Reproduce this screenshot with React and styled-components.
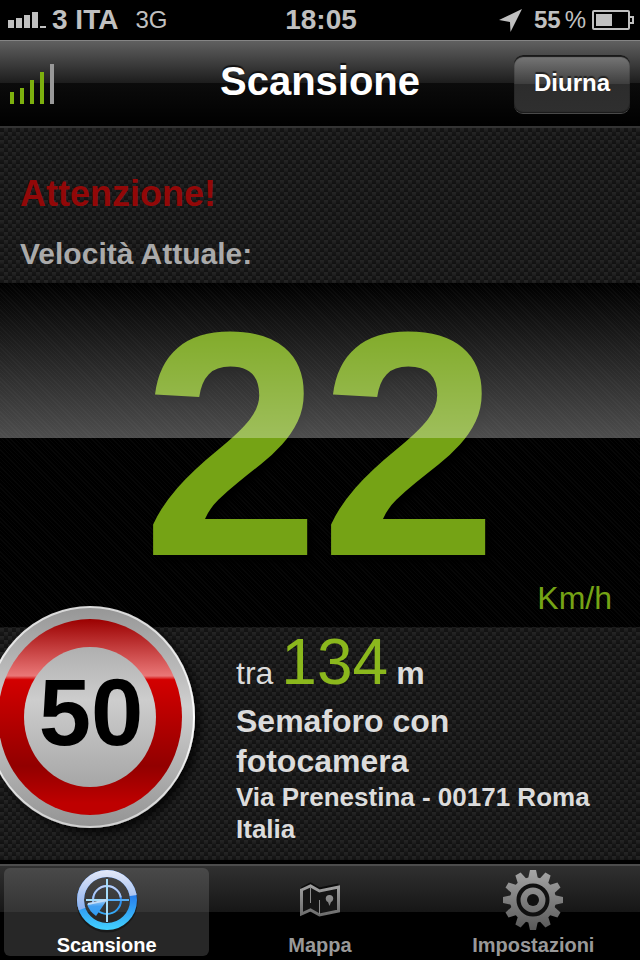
import React from "react";
import styled, { createGlobalStyle, css } from "styled-components";

const GlobalStyle = createGlobalStyle`
  *, *::before, *::after { box-sizing: border-box; }
  body { margin: 0; background: #000; }
  h1, h2, p { margin: 0; }
  button { font: inherit; color: inherit; border: 0; cursor: pointer; }
`;

const Screen = styled.div`
  min-height: 100vh;
  display: flex;
  flex-direction: column;
  overflow: hidden;
  color: #dcdcdc;
  font-family: "Liberation Sans", Arial, sans-serif;
  font-weight: 700;
  background:
    repeating-linear-gradient(rgba(0, 0, 0, 0) 0 1px, rgba(0, 0, 0, 0.25) 4px),
    repeating-conic-gradient(#242424 0 25%, #161616 0 50%) 0 0 / 8px 8px;
`;

const StatusBar = styled.header`
  height: 40px;
  padding: 0 6px 0 8px;
  display: grid;
  grid-template-columns: 1fr auto 1fr;
  align-items: center;
  background: #000;
  color: #c0c0c0;
`;

const StatusGroup = styled.div`
  display: flex;
  align-items: center;
  justify-content: ${(p) => (p.$end ? "flex-end" : "flex-start")};
  gap: ${(p) => (p.$end ? 6 : 5)}px;
  white-space: nowrap;
`;

const StatusText = styled.span`
  font-size: ${(p) => p.$size || 24}px;
  font-weight: ${(p) => (p.$light ? 400 : 700)};
  line-height: 32px;
`;

const Network = styled(StatusText)`
  margin-left: 12px;
`;

const Charge = styled.span`
  display: flex;
  gap: 4px;
  margin-left: 6px;
`;

const TitleBar = styled.div`
  display: grid;
  grid-template-columns: 1fr auto 1fr;
  align-items: center;
  height: 88px;
  padding: 0 10px;
  border-top: 1px solid #858585;
  border-bottom: 2px solid #333;
  background: linear-gradient(#606060, #1c1c1c 50%, #0b0b0b 50%, #000);
`;

const Title = styled.h1`
  color: #fff;
  font-size: 40px;
  line-height: 48px;
  margin-bottom: 6px;
  text-shadow: 0 -2px 1px #111;
`;

const ModeButton = styled.button`
  justify-self: end;
  height: 58px;
  padding: 0 20px 2px;
  color: #fff;
  font-size: 24px;
  font-weight: 700;
  border-radius: 9px;
  background: linear-gradient(#797979, #3e3e3e 50%, #2c2c2c 50%, #2f2f2f);
  box-shadow: inset 0 2px 1px #191919, inset 0 -1px 1px #1a1a1a, 0 1px 0 #4a4a4a;
  text-shadow: 0 -2px 1px #222;
`;

const Signal = styled.svg`
  display: block;
`;

const Intro = styled.section`
  padding: 46px 20px 11px;
`;

const Warning = styled.p`
  color: #920808;
  font-size: 36px;
  line-height: 40px;
`;

const SpeedLabel = styled.h2`
  margin-top: 22px;
  color: #aaa;
  font-size: 30px;
  line-height: 36px;
`;

const SpeedPanel = styled.section`
  position: relative;
  padding: 41px 28px 11px;
  color: #75a315;
  text-align: center;
  background: repeating-linear-gradient(45deg, #000 0 2px, #070707 2px 3px);

  &::after {
    content: "";
    position: absolute;
    inset: 0 0 auto;
    height: 45%;
    background: linear-gradient(rgba(255, 255, 255, 0), rgba(255, 255, 255, 0.3));
    pointer-events: none;
  }
`;

const SpeedValue = styled.p`
  font-size: 320px;
  line-height: 240px;
  text-shadow: 5px 6px 6px #000;
`;

const SpeedUnit = styled.p`
  margin-top: 16px;
  text-align: right;
  font-size: 32px;
  font-weight: 400;
  line-height: 36px;
`;

const Detail = styled.section`
  flex: 1;
  display: flex;
  align-items: flex-start;
`;

const SignColumn = styled.div`
  flex: 0 0 236px;
  margin-top: -27px;
`;

const SignDrawing = styled.svg`
  position: relative;
  display: block;
`;

const DetailText = styled.div`
  flex: 1;
  padding: 3px 20px 15px 0;
`;

const Distance = styled.p`
  display: flex;
  align-items: baseline;
  gap: 8px;
  font-size: 32px;
  font-weight: 400;
  line-height: 32px;
`;

const Meters = styled.span`
  color: #8bb81d;
  font-size: 64px;
  line-height: 64px;
`;

const Unit = styled.span`
  font-weight: 700;
`;

const Hazard = styled.h2`
  max-width: 300px;
  margin-top: 7px;
  font-size: 32px;
  line-height: 40px;
`;

const Address = styled.p`
  font-size: 26px;
  line-height: 32px;
`;

const TabBar = styled.nav`
  display: grid;
  grid-template-columns: repeat(3, 1fr);
  gap: 8px;
  padding: 4px 4px;
  border-top: 4px solid #000;
  background: linear-gradient(#4c4c4c 2px, #303030 2px, #161616 48px, #000 48px);
`;

const Tab = styled.button`
  display: flex;
  flex-direction: column;
  align-items: center;
  gap: 4px;
  padding: 2px 0 0;
  border-radius: 6px;
  color: ${(p) => (p.$active ? "#fff" : "#999")};
  background: transparent;
  ${(p) =>
    p.$active &&
    css`
      background: linear-gradient(#494949, #343434 44px, #272727 44px);
    `}
`;

const TabLabel = styled.span`
  font-size: 20px;
  font-weight: 700;
  line-height: 22px;
`;

const TabIcon = styled.svg`
  display: block;
  overflow: visible;
`;

function CarrierBars() {
  return (
    <svg width="39" height="16" viewBox="0 0 39 16" fill="#c0c0c0" aria-hidden="true">
      <path d="M0 8h6v8H0zM8 6h6v10H8zM16 3h6v13h-6zM24 0h6v16h-6zM32 14h6v2h-6z" />
    </svg>
  );
}

function LocationArrow() {
  return (
    <svg width="23" height="23" viewBox="0 0 23 23" fill="#c0c0c0" aria-hidden="true">
      <path d="M23 0 11.500 23 11 13 0 11z" />
    </svg>
  );
}

function Battery() {
  return (
    <svg width="42" height="20" viewBox="0 0 42 20" aria-hidden="true">
      <rect x="1" y="1" width="36" height="18" rx="1" fill="none" stroke="#c0c0c0" strokeWidth="2" />
      <path d="M38 7h3v6h-3" fill="none" stroke="#c0c0c0" strokeWidth="2" />
      <path d="M4 4h16v12H4z" fill="#c0c0c0" />
    </svg>
  );
}

function GpsBars() {
  return (
    <Signal width="44" height="40" viewBox="0 0 44 40" role="img" aria-label="GPS">
      <path d="M0 28h4v12H0zM10 24h4v16h-4zM20 16h4v24h-4zM30 8h4v32h-4z" fill="#7db00e" />
      <path d="M40 0h4v40h-4z" fill="#999" />
    </Signal>
  );
}

function SpeedLimit({ value }) {
  return (
    <SignDrawing width="210" height="233" viewBox="0 600 210 233" overflow="visible" role="img" aria-label={`Limite ${value}`}>
      <defs>
        <linearGradient id="rim" x1="0" y1="0" x2="0" y2="1">
          <stop offset="0" stopColor="#969696" />
          <stop offset=".45" stopColor="#cfcfcf" />
          <stop offset="1" stopColor="#949494" />
        </linearGradient>
        <linearGradient id="edge" x1="0" y1="0" x2="0" y2="1">
          <stop offset="0" stopColor="#d8d8d8" />
          <stop offset=".5" stopColor="#fff" />
          <stop offset="1" stopColor="#d0d0d0" />
        </linearGradient>
        <linearGradient id="red" x1="0" y1="0" x2="0" y2="1">
          <stop offset="0" stopColor="#9b0000" />
          <stop offset=".29" stopColor="#ea7777" />
          <stop offset=".31" stopColor="#d30000" />
          <stop offset=".75" stopColor="#920000" />
          <stop offset=".94" stopColor="#be0000" />
        </linearGradient>
        <linearGradient id="face" x1="0" y1="0" x2="0" y2="1">
          <stop offset="0" stopColor="#afafaf" />
          <stop offset=".38" stopColor="#cdcdcd" />
          <stop offset="1" stopColor="#a6a6a6" />
        </linearGradient>
        <filter id="shade" x="-20%" y="-20%" width="140%" height="140%">
          <feDropShadow dx="5" dy="5" stdDeviation="5" floodColor="#000" floodOpacity=".8" />
        </filter>
      </defs>
      <ellipse cx="90" cy="717" rx="104" ry="110" fill="url(#rim)" stroke="url(#edge)" strokeWidth="2" filter="url(#shade)" />
      <ellipse cx="90" cy="717" rx="92" ry="98" fill="url(#red)" />
      <ellipse cx="90" cy="717" rx="66" ry="70" fill="url(#face)" />
      <text x="91" y="745" textAnchor="middle" fontSize="94" fontWeight="700" fill="#000">{value}</text>
    </SignDrawing>
  );
}

function RadarIcon() {
  return (
    <TabIcon width="60" height="60" viewBox="0 0 60 60" aria-hidden="true">
      <defs>
        <linearGradient id="radarLow" gradientUnits="userSpaceOnUse" x1="0" y1="22" x2="0" y2="60">
          <stop offset="0" stopColor="#2475ea" />
          <stop offset="1" stopColor="#43d3ff" />
        </linearGradient>
        <linearGradient id="radarHigh" gradientUnits="userSpaceOnUse" x1="0" y1="0" x2="0" y2="38">
          <stop offset="0" stopColor="#e4e9f8" />
          <stop offset="1" stopColor="#8fb2ee" />
        </linearGradient>
        <linearGradient id="sweep" x1="0" y1="0" x2="0" y2="1">
          <stop offset="0" stopColor="#a4ccf5" />
          <stop offset=".4" stopColor="#3f9ff1" />
          <stop offset="1" stopColor="#2e9cf5" />
        </linearGradient>
        <clipPath id="glossTop"><path d="M0 0h60v25Q30 28 0 41z" /></clipPath>
      </defs>
      <circle cx="30" cy="32" r="28" fill="none" stroke="#111" strokeOpacity=".6" strokeWidth="5" />
      <g fill="none" stroke="url(#radarLow)">
        <circle cx="30" cy="30" r="26.500" strokeWidth="7" />
        <circle cx="30" cy="30" r="14" strokeWidth="2" />
      </g>
      <g clipPath="url(#glossTop)" fill="none" stroke="url(#radarHigh)">
        <circle cx="30" cy="30" r="26.500" strokeWidth="7" />
        <circle cx="30" cy="30" r="14" strokeWidth="2" />
      </g>
      <path d="M30 30h22" stroke="#57adf5" strokeWidth="2" />
      <path d="M30 9v43M9 30h21" stroke="#a4dcfa" strokeWidth="2" />
      <path d="M30 30 10 34Q12 41 19 46z" fill="url(#sweep)" />
      <path d="M30 30 11 34" stroke="#c2dcf7" strokeWidth="2" />
    </TabIcon>
  );
}

function MapIcon() {
  return (
    <TabIcon width="60" height="60" viewBox="0 0 60 60" aria-hidden="true">
      <defs>
        <linearGradient id="mapGrey" gradientUnits="userSpaceOnUse" x1="0" y1="14" x2="0" y2="46">
          <stop offset="0" stopColor="#a3a3a3" />
          <stop offset="1" stopColor="#6b6b6b" />
        </linearGradient>
      </defs>
      <path d="m11.500 18.500 9-4.500 9 5 19-4" fill="none" stroke="#0c0c0c" strokeWidth="3" />
      <path d="m11.500 20 9-4 9 5 19-4v24l-19 4-9-5-9 4z" fill="#151515" stroke="url(#mapGrey)" strokeWidth="3" />
      <path d="M20.500 18v15M29.500 30v14" stroke="#8a8a8a" strokeWidth="1" />
      <path d="M39.500 25c-5 0-4.500 6-1.500 7l1.500 4 1.500-4c3-1 3.500-7-1.500-7z" fill="url(#mapGrey)" />
    </TabIcon>
  );
}

const TEETH = Array.from({ length: 12 }, (_, i) => i * 30);

function GearIcon() {
  return (
    <TabIcon width="60" height="60" viewBox="0 0 60 60" aria-hidden="true">
      <defs>
        <linearGradient id="gearGrey" gradientUnits="userSpaceOnUse" x1="0" y1="0" x2="0" y2="60">
          <stop offset="0" stopColor="#a6a6a6" />
          <stop offset="1" stopColor="#585858" />
        </linearGradient>
        <mask id="gearShape">
          <g fill="#fff">
            <circle cx="30" cy="30" r="23" />
            {TEETH.map((angle) => (
              <path key={angle} d="M25 9 27 0h6l2 9z" transform={`rotate(${angle} 30 30)`} />
            ))}
          </g>
          <circle cx="30" cy="30" r="14.500" fill="none" stroke="#000" strokeWidth="4" />
          <circle cx="30" cy="30" r="6" fill="#000" />
        </mask>
      </defs>
      <circle cx="30" cy="30" r="18" fill="#101010" />
      <path d="M0 0h60v60H0z" fill="url(#gearGrey)" mask="url(#gearShape)" />
    </TabIcon>
  );
}

const TABS = [
  { label: "Scansione", Icon: RadarIcon, active: true },
  { label: "Mappa", Icon: MapIcon },
  { label: "Impostazioni", Icon: GearIcon },
];

export default function App() {
  return (
    <>
      <GlobalStyle />
      <Screen>
        <StatusBar>
          <StatusGroup>
            <CarrierBars />
            <StatusText $size={28}>3 ITA</StatusText>
            <Network $light>3G</Network>
          </StatusGroup>
          <StatusText $size={28}>18:05</StatusText>
          <StatusGroup $end>
            <LocationArrow />
            <Charge>
              <StatusText>55</StatusText>
              <StatusText $light>%</StatusText>
            </Charge>
            <Battery />
          </StatusGroup>
        </StatusBar>
        <TitleBar>
          <GpsBars />
          <Title>Scansione</Title>
          <ModeButton type="button">Diurna</ModeButton>
        </TitleBar>
        <Intro>
          <Warning>Attenzione!</Warning>
          <SpeedLabel>Velocità Attuale:</SpeedLabel>
        </Intro>
        <SpeedPanel>
          <SpeedValue>22</SpeedValue>
          <SpeedUnit>Km/h</SpeedUnit>
        </SpeedPanel>
        <Detail>
          <SignColumn>
            <SpeedLimit value="50" />
          </SignColumn>
          <DetailText>
            <Distance>
              <span>tra</span>
              <Meters>134</Meters>
              <Unit>m</Unit>
            </Distance>
            <Hazard>Semaforo con fotocamera</Hazard>
            <Address>Via Prenestina - 00171 Roma<br />Italia</Address>
          </DetailText>
        </Detail>
        <TabBar>
          {TABS.map(({ label, Icon, active }) => (
            <Tab key={label} type="button" $active={active} aria-current={active ? "page" : undefined}>
              <Icon />
              <TabLabel>{label}</TabLabel>
            </Tab>
          ))}
        </TabBar>
      </Screen>
    </>
  );
}
